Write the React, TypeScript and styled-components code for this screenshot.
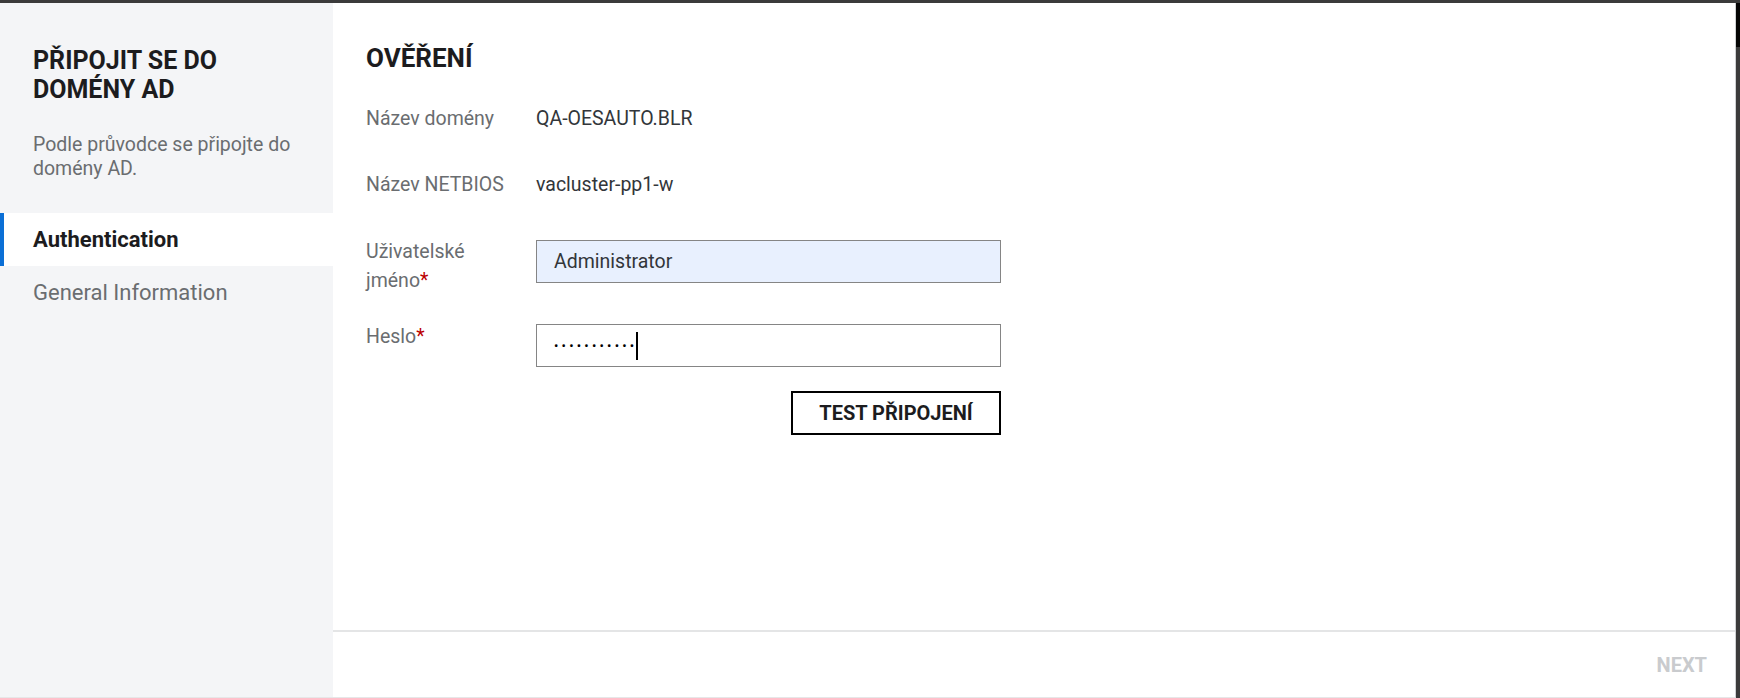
import React from "react";
import styled, { createGlobalStyle } from "styled-components";

const GlobalStyle = createGlobalStyle`
  html, body {
    margin: 0;
    padding: 0;
  }
  body {
    font-family: Roboto, "Liberation Sans", Arial, sans-serif;
    background: #3b3b3b;
  }
`;

const Screen = styled.div`
  box-sizing: border-box;
  width: 1740px;
  height: 698px;
  padding-top: 3px;
  background: linear-gradient(#050505, #050505) right 3px / 4px 44px no-repeat,
    #3b3b3b;
`;

const Dialog = styled.div`
  box-sizing: border-box;
  width: 1736px;
  height: 695px;
  display: flex;
  background: #ffffff;
  border-right: 1px solid #cfd1d3;
  border-bottom: 1px solid #e6e7e8;
`;

const Sidebar = styled.aside`
  width: 333px;
  flex: none;
  display: flex;
  flex-direction: column;
  background: #f4f5f7;
  padding-top: 43px;
  box-sizing: border-box;
`;

const SideHeader = styled.div`
  padding: 0 33px;
`;

const SideTitle = styled.h2`
  margin: 0;
  max-width: 220px;
  font-size: 25px;
  line-height: 29px;
  font-weight: 700;
  color: #1c1c1e;
  text-transform: uppercase;
`;

const SideDesc = styled.p`
  margin: 29px 0 0;
  font-size: 19.5px;
  line-height: 24px;
  color: #6a6d70;
`;

const Nav = styled.nav`
  margin-top: 32px;
  display: flex;
  flex-direction: column;
`;

const NavItem = styled.div<{ $active?: boolean }>`
  height: 53px;
  display: flex;
  align-items: center;
  box-sizing: border-box;
  padding-left: 29px;
  border-left: 4px solid ${(p) => (p.$active ? "#0b6fd6" : "transparent")};
  background: ${(p) => (p.$active ? "#ffffff" : "transparent")};
  font-size: 22px;
  font-weight: ${(p) => (p.$active ? 700 : 400)};
  color: ${(p) => (p.$active ? "#1c1c1e" : "#6a6d70")};
`;

const Main = styled.main`
  flex: 1;
  display: flex;
  flex-direction: column;
  min-width: 0;
`;

const Body = styled.section`
  flex: 1;
  padding: 41px 33px 0;
`;

const Heading = styled.h1`
  margin: 0;
  font-size: 26px;
  line-height: 28px;
  font-weight: 700;
  color: #1c1c1e;
`;

const Form = styled.div`
  display: grid;
  grid-template-columns: 170px 465px;
  align-items: start;
`;

const Label = styled.div<{ $top?: number; $shift?: number }>`
  margin-top: ${(p) => (p.$top ?? 0) + (p.$shift ?? 0)}px;
  margin-bottom: ${(p) => (p.$shift ? "-20px" : "0")};
  max-width: 145px;
  font-size: 19.5px;
  line-height: ${(p) => (p.$shift ? "29px" : "24px")};
  color: #6a6d70;
`;

const LabelLine = styled.span`
  display: block;
`;

const Value = styled.div<{ $top?: number }>`
  margin-top: ${(p) => p.$top ?? 0}px;
  font-size: 19.5px;
  line-height: 24px;
  color: #32363a;
`;

const Required = styled.span`
  color: #bb0000;
`;

const Field = styled.div<{ $top?: number; $filled?: boolean }>`
  margin-top: ${(p) => p.$top ?? 0}px;
  box-sizing: border-box;
  height: 43px;
  display: flex;
  align-items: center;
  padding-left: 17px;
  border: 1px solid #858585;
  background: ${(p) => (p.$filled ? "#e8f0fe" : "#ffffff")};
  font-size: 19.5px;
  color: #32363a;
`;

const Dots = styled.span`
  font-size: 13px;
  letter-spacing: 3.2px;
  color: #000;
`;

const Caret = styled.span`
  width: 2px;
  height: 28px;
  background: #000;
  margin-left: -1px;
`;

const TestButton = styled.button`
  grid-column: 2;
  justify-self: end;
  margin-top: 24px;
  width: 210px;
  height: 44px;
  box-sizing: border-box;
  border: 2px solid #000;
  background: #fff;
  font-family: inherit;
  font-size: 20px;
  font-weight: 700;
  color: #1c1c1e;
  cursor: pointer;
`;

const Footer = styled.footer`
  height: 67px;
  box-sizing: border-box;
  border-top: 2px solid #e4e5e6;
  display: flex;
  align-items: center;
  justify-content: flex-end;
  padding-right: 28px;
`;

const NextButton = styled.button`
  border: none;
  background: none;
  padding: 0;
  font-family: inherit;
  font-size: 20px;
  font-weight: 700;
  color: #c9cbce;
`;

export default function App() {
  return (
    <>
      <GlobalStyle />
      <Screen>
        <Dialog>
          <Sidebar>
            <SideHeader>
              <SideTitle>Připojit se do domény AD</SideTitle>
              <SideDesc>Podle průvodce se připojte do domény AD.</SideDesc>
            </SideHeader>
            <Nav>
              <NavItem $active>Authentication</NavItem>
              <NavItem>General Information</NavItem>
            </Nav>
          </Sidebar>
          <Main>
            <Body>
              <Heading>OVĚŘENÍ</Heading>
              <Form>
                <Label $top={35}>Název domény</Label>
                <Value $top={35}>QA-OESAUTO.BLR</Value>
                <Label $top={42}>Název NETBIOS</Label>
                <Value $top={42}>vacluster-pp1-w</Value>
                <Label $top={43} $shift={-3}>
                  <LabelLine>Uživatelské</LabelLine>
                  <LabelLine>
                    jméno<Required>*</Required>
                  </LabelLine>
                </Label>
                <Field $top={43} $filled>
                  Administrator
                </Field>
                <Label $top={41} $shift={-2}>
                  Heslo<Required>*</Required>
                </Label>
                <Field $top={41}>
                  <Dots>•••••••••••</Dots>
                  <Caret />
                </Field>
                <TestButton>TEST PŘIPOJENÍ</TestButton>
              </Form>
            </Body>
            <Footer>
              <NextButton>NEXT</NextButton>
            </Footer>
          </Main>
        </Dialog>
      </Screen>
    </>
  );
}
